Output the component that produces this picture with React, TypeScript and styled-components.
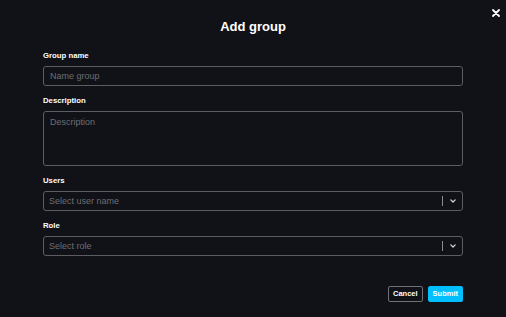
import React from "react";
import styled, { createGlobalStyle } from "styled-components";

const GlobalStyle = createGlobalStyle`
  html, body {
    margin: 0;
    padding: 0;
    background: #111217;
  }
  * {
    box-sizing: border-box;
  }
`;

const Modal = styled.div`
  position: relative;
  width: 506px;
  height: 317px;
  background: #111217;
  font-family: "Liberation Sans", Arial, sans-serif;
  color: #ffffff;
  padding: 19px 43px 0;
  display: flex;
  flex-direction: column;
`;

const CloseButton = styled.button`
  position: absolute;
  top: 7px;
  right: 5px;
  width: 11px;
  height: 11px;
  padding: 0;
  border: none;
  background: transparent;
  display: flex;
  align-items: center;
  justify-content: center;
  cursor: pointer;
`;

const Title = styled.h1`
  margin: 0;
  height: 16px;
  line-height: 16px;
  font-size: 13px;
  font-weight: 700;
  text-align: center;
`;

const Form = styled.form`
  margin-top: 16px;
  display: flex;
  flex-direction: column;
  gap: 10px;
`;

const Field = styled.div`
  display: flex;
  flex-direction: column;
  gap: 5px;
`;

const Label = styled.label`
  height: 10px;
  line-height: 9px;
  font-size: 7.75px;
  font-weight: 700;
  color: #ffffff;
`;

const TextInput = styled.input`
  width: 100%;
  height: 20px;
  padding: 0 6px;
  border: 1px solid #5b5d63;
  border-radius: 3px;
  background: #111217;
  color: #ffffff;
  font-family: inherit;
  font-size: 9px;
  outline: none;
  &::placeholder {
    color: #6c6e75;
  }
`;

const TextArea = styled.textarea`
  width: 100%;
  height: 55px;
  padding: 5px 6px;
  border: 1px solid #5b5d63;
  border-radius: 3px;
  background: #111217;
  color: #ffffff;
  font-family: inherit;
  font-size: 9px;
  resize: none;
  outline: none;
  &::placeholder {
    color: #6c6e75;
  }
`;

const SelectBox = styled.div`
  height: 20px;
  border: 1px solid #5b5d63;
  border-radius: 3px;
  display: flex;
  align-items: center;
  padding-left: 5px;
`;

const SelectPlaceholder = styled.span`
  flex: 1;
  font-size: 9px;
  color: #6c6e75;
`;

const Divider = styled.span`
  width: 1px;
  height: 10px;
  background: #8a8b90;
`;

const Chevron = styled.span`
  width: 19px;
  display: flex;
  align-items: center;
  justify-content: center;
`;

const Actions = styled.div`
  margin-top: 30px;
  display: flex;
  justify-content: flex-end;
  gap: 5px;
`;

const Button = styled.button<{ $primary?: boolean }>`
  height: 16px;
  padding: 0 4px;
  border-radius: 2px;
  border: 1px solid ${(p) => (p.$primary ? "#00bfff" : "#6f7076")};
  background: ${(p) => (p.$primary ? "#00bfff" : "#111217")};
  color: #ffffff;
  font-family: inherit;
  font-size: 7.5px;
  font-weight: 700;
  line-height: 14px;
  cursor: pointer;
`;

const Select: React.FC<{ placeholder: string }> = ({ placeholder }) => (
  <SelectBox>
    <SelectPlaceholder>{placeholder}</SelectPlaceholder>
    <Divider />
    <Chevron>
      <svg width="6" height="4" viewBox="0 0 6 4">
        <path d="M0.8 0.8 L3 3 L5.2 0.8" fill="none" stroke="#d8d9dc" strokeWidth="1.2" strokeLinecap="round" strokeLinejoin="round" />
      </svg>
    </Chevron>
  </SelectBox>
);

export default function App() {
  return (
    <>
      <GlobalStyle />
      <Modal>
        <CloseButton aria-label="Close">
          <svg width="8" height="8" viewBox="0 0 8 8">
            <path d="M1 1 L7 7 M7 1 L1 7" stroke="#ffffff" strokeWidth="1.8" strokeLinecap="round" />
          </svg>
        </CloseButton>
        <Title>Add group</Title>
        <Form onSubmit={(e) => e.preventDefault()}>
          <Field>
            <Label>Group name</Label>
            <TextInput placeholder="Name group" />
          </Field>
          <Field>
            <Label>Description</Label>
            <TextArea placeholder="Description" />
          </Field>
          <Field>
            <Label>Users</Label>
            <Select placeholder="Select user name" />
          </Field>
          <Field>
            <Label>Role</Label>
            <Select placeholder="Select role" />
          </Field>
        </Form>
        <Actions>
          <Button type="button">Cancel</Button>
          <Button type="button" $primary>
            Submit
          </Button>
        </Actions>
      </Modal>
    </>
  );
}
